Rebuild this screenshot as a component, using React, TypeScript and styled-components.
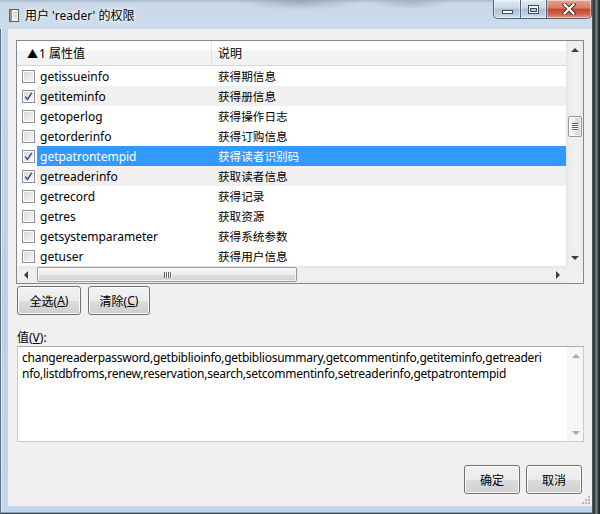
import React from "react";
import styled, { createGlobalStyle } from "styled-components";

const GlobalStyle = createGlobalStyle`
  html, body { margin: 0; padding: 0; background: #2a2f33; }
  body { font-family: "Noto Sans", "Noto Sans CJK SC", sans-serif; }
  #root { width: 600px; height: 514px; overflow: hidden; }
  * { box-sizing: border-box; }
`;

const UI_FONT = `"Noto Sans", "Noto Sans CJK SC", sans-serif`;

const Screen = styled.div`
  display: flex;
  width: 600px;
  height: 514px;
  overflow: hidden;
`;

const Desktop = styled.div`
  width: 8px;
  background: linear-gradient(90deg, #5d6266 0px, #2a2d2f 2px, #3c4447 3px, #7d969e 4px, #3b4245 6px, #1e2022 8px);
`;

const Window = styled.div`
  width: 592px;
  display: flex;
  flex-direction: column;
  padding: 0 0 8px 8px;
  background: linear-gradient(180deg, #cbdaea 0px, #c4d6ea 60px, #bcd1e8 300px, #c3d6eb 514px);
  box-shadow: inset 1px 0 0 #5f6f80, inset 0 -1px 0 #3c4652, inset 0 -2px 0 #8aa3bd, inset 2px 0 0 #e4eef8;
`;

const TitleBar = styled.div`
  height: 29px;
  display: flex;
  align-items: flex-start;
  margin-left: -8px;
  padding-left: 9px;
  background:
    radial-gradient(ellipse 60px 8px at 300px 2px, rgba(120,130,145,0.45), transparent),
    radial-gradient(ellipse 40px 6px at 410px 3px, rgba(120,130,145,0.35), transparent),
    linear-gradient(180deg, #a9b8c8 0px, #c9d7e6 3px, #cddcec 28px);
`;

const AppIcon = styled.svg`
  margin-top: 9px;
  flex: none;
`;

const TitleText = styled.div`
  margin-left: 6px;
  margin-top: 7px;
  font-family: ${UI_FONT};
  font-size: 12px;
  line-height: 18px;
  color: #000;
  text-shadow: 0 0 6px #fff, 0 0 4px #fff;
  white-space: nowrap;
`;

const Caption = styled.div`
  margin-left: auto;
  display: flex;
  height: 19px;
`;

const CapButton = styled.div<{ $kind: "min" | "max" | "close" }>`
  height: 19px;
  width: ${(p) => (p.$kind === "close" ? 45 : p.$kind === "min" ? 28 : 26)}px;
  display: flex;
  align-items: center;
  justify-content: center;
  border: 1px solid #4f6276;
  border-top: none;
  border-left-width: ${(p) => (p.$kind === "min" ? 1 : 0)}px;
  border-bottom-left-radius: ${(p) => (p.$kind === "min" ? 5 : 0)}px;
  border-bottom-right-radius: ${(p) => (p.$kind === "close" ? 5 : 0)}px;
  background: ${(p) =>
    p.$kind === "close"
      ? "linear-gradient(180deg, #e6a593 0%, #d77a63 45%, #c5452c 52%, #d0674e 80%, #e09a80 100%)"
      : "linear-gradient(180deg, #e3ecf5 0%, #c7d6e6 45%, #aebfd2 52%, #bfcfe1 80%, #d4e2f0 100%)"};
  box-shadow: inset 0 0 0 1px rgba(255,255,255,0.45);
`;

const MinGlyph = styled.div`
  width: 11px;
  height: 4px;
  margin-top: 6px;
  background: #fff;
  border: 1px solid #3b4c60;
`;

const MaxGlyph = styled.div`
  width: 11px;
  height: 9px;
  border: 1px solid #3b4c60;
  background: #fff;
  box-shadow: inset 0 0 0 1px #fff;
  position: relative;
  &::after {
    content: "";
    position: absolute;
    left: 1px;
    right: 1px;
    top: 2px;
    bottom: 1px;
    border: 1px solid #3b4c60;
    background: #b8c9dc;
  }
`;

const Client = styled.div`
  flex: 1;
  display: flex;
  flex-direction: column;
  align-items: flex-start;
  padding: 11px 8px 12px 8px;
  background: #f0f0f0;
  font-family: ${UI_FONT};
  font-size: 12px;
  color: #000;
`;

/* ---------- list view ---------- */

const ListView = styled.div`
  width: 568px;
  height: 244px;
  border: 1px solid #828790;
  background: #fff;
  display: grid;
  grid-template-columns: 1fr 17px;
  grid-template-rows: 1fr 17px;
`;

const ListContent = styled.div`
  display: flex;
  flex-direction: column;
  overflow: hidden;
`;

const Header = styled.div`
  height: 25px;
  flex: none;
  display: flex;
  border-bottom: 1px solid #d5d5d5;
  background: linear-gradient(180deg, #ffffff 0px, #ffffff 9px, #f3f4f6 10px, #f1f2f4 24px);
`;

const HeaderCell = styled.div<{ $w?: number; $pad: number }>`
  ${(p) => (p.$w ? `width: ${p.$w}px;` : "flex: 1;")}
  padding-left: ${(p) => p.$pad}px;
  display: flex;
  align-items: center;
  white-space: nowrap;
  border-right: ${(p) => (p.$w ? "1px solid #e2e3e5" : "none")};
`;

const SortMark = styled.span`
  font-size: 11px;
  margin-right: 1px;
`;

const Row = styled.div`
  height: 20px;
  flex: none;
  display: flex;
  align-items: stretch;
`;

const CheckCell = styled.div`
  width: 20px;
  flex: none;
  display: flex;
  align-items: center;
  padding-left: 5px;
`;

const RowBody = styled.div<{ $state: "plain" | "checked" | "selected" }>`
  flex: 1;
  display: grid;
  grid-template-columns: 175px 1fr;
  align-items: center;
  white-space: nowrap;
  background: ${(p) =>
    p.$state === "selected" ? "#3399ff" : p.$state === "checked" ? "#f0f0f0" : "#fff"};
  color: ${(p) => (p.$state === "selected" ? "#fff" : "#000")};
`;

const NameCell = styled.div`
  padding-left: 3px;
  font-size: 12px;
`;

const DescCell = styled.div`
  padding-left: 6px;
  font-size: 11.6px;
`;

const Box = styled.div`
  width: 13px;
  height: 13px;
  border: 1px solid #8e8f8f;
  background: #fff;
  padding: 1px;
  display: flex;
`;

const BoxInner = styled.div`
  flex: 1;
  background: linear-gradient(135deg, #d8d8d8 0%, #ececec 60%, #f8f8f8 100%);
  display: flex;
  align-items: center;
  justify-content: center;
`;

const CheckBox: React.FC<{ checked: boolean }> = ({ checked }) => (
  <Box>
    <BoxInner>
      {checked && (
        <svg width="9" height="9" viewBox="0 0 9 9">
          <path d="M1.2 4.6 L3.4 7.4 L7.8 0.8" fill="none" stroke="#3a4e8c" strokeWidth="1.5" />
        </svg>
      )}
    </BoxInner>
  </Box>
);

/* ---------- scrollbars ---------- */

const VScroll = styled.div<{ $light?: boolean }>`
  display: flex;
  flex-direction: column;
  background: ${(p) =>
    p.$light
      ? "#f6f6f6"
      : "linear-gradient(90deg, #e4e4e4 0px, #eeeeee 3px, #f0f0f0 12px, #ebebeb 17px)"};
`;

const HScroll = styled.div`
  display: flex;
  align-items: center;
  background: linear-gradient(180deg, #e4e4e4 0px, #eeeeee 3px, #f0f0f0 12px, #ebebeb 17px);
`;

const Corner = styled.div`
  background: #f0f0f0;
`;

const ArrowBtn = styled.div`
  width: 17px;
  height: 17px;
  flex: none;
  display: flex;
  align-items: center;
  justify-content: center;
`;

const Arrow = styled.div<{ $dir: "up" | "down" | "left" | "right"; $color?: string }>`
  width: 0;
  height: 0;
  border-style: solid;
  border-color: transparent;
  ${(p) => {
    const c = p.$color || "#3c3c3c";
    switch (p.$dir) {
      case "up":
        return `border-width: 0 4px 4px 4px; border-bottom-color: ${c};`;
      case "down":
        return `border-width: 4px 4px 0 4px; border-top-color: ${c};`;
      case "left":
        return `border-width: 4px 4px 4px 0; border-right-color: ${c};`;
      default:
        return `border-width: 4px 0 4px 4px; border-left-color: ${c};`;
    }
  }}
`;

const Track = styled.div<{ $horizontal?: boolean }>`
  flex: 1;
  display: flex;
  flex-direction: ${(p) => (p.$horizontal ? "row" : "column")};
  align-items: center;
`;

const VThumb = styled.div`
  margin-top: 58px;
  width: 14px;
  height: 21px;
  border: 1px solid #979797;
  border-radius: 2px;
  background: linear-gradient(90deg, #f5f5f5 0%, #ececec 50%, #dcdcdc 51%, #d4d4d4 100%);
  box-shadow: inset 0 0 0 1px rgba(255,255,255,0.7);
  display: flex;
  flex-direction: column;
  align-items: center;
  justify-content: center;
  gap: 1px;
`;

const HThumb = styled.div`
  margin-left: 3px;
  width: 260px;
  height: 15px;
  border: 1px solid #979797;
  border-radius: 2px;
  background: linear-gradient(180deg, #f5f5f5 0%, #ececec 50%, #dcdcdc 51%, #d4d4d4 100%);
  box-shadow: inset 0 0 0 1px rgba(255,255,255,0.7);
  display: flex;
  align-items: center;
  justify-content: center;
  gap: 1px;
`;

const GripH = styled.div`
  width: 6px;
  height: 1px;
  background: #5b5b5b;
  box-shadow: 0 1px 0 #fff;
`;

const GripV = styled.div`
  width: 1px;
  height: 6px;
  background: #5b5b5b;
  box-shadow: 1px 0 0 #fff;
`;

/* ---------- buttons ---------- */

const ButtonRow = styled.div`
  display: flex;
  gap: 7px;
  margin-top: 2px;
  margin-left: 1px;
`;

const Button = styled.div<{ $w: number }>`
  width: ${(p) => p.$w}px;
  height: 29px;
  border: 1px solid #707070;
  border-radius: 3px;
  background: linear-gradient(180deg, #f2f2f2 0%, #ebebeb 50%, #dddddd 51%, #cfcfcf 100%);
  box-shadow: inset 0 0 0 1px #fbfbfb;
  display: flex;
  align-items: center;
  justify-content: center;
  font-size: 12px;
  white-space: nowrap;
  color: #000;
`;

const Key = styled.span`
  text-decoration: underline;
`;

const FieldLabel = styled.div`
  margin-top: 15px;
  margin-left: 1px;
  height: 16px;
  line-height: 16px;
  font-size: 12px;
`;

const TextBox = styled.div`
  margin-left: 1px;
  width: 567px;
  height: 96px;
  border: 1px solid #c8cacf;
  border-top-color: #abadb3;
  background: #fff;
  display: flex;
`;

const TextBody = styled.div`
  flex: 1;
  padding: 3px 0 0 4px;
  font-size: 12px;
  line-height: 16px;
  letter-spacing: -0.26px;
  white-space: nowrap;
  overflow: hidden;
`;

const TextLine = styled.div``;

const TextScroll = styled(VScroll)`
  width: 16px;
`;

const Footer = styled.div`
  margin-top: 23px;
  align-self: flex-end;
  margin-right: 2px;
  display: flex;
  gap: 6px;
`;

const ResizeGrip = styled.svg`
  position: absolute;
  right: 2px;
  bottom: 2px;
`;

const ClientWrap = styled.div`
  flex: 1;
  display: flex;
  position: relative;
`;

const rows = [
  { name: "getissueinfo", desc: "获得期信息", checked: false },
  { name: "getiteminfo", desc: "获得册信息", checked: true },
  { name: "getoperlog", desc: "获得操作日志", checked: false },
  { name: "getorderinfo", desc: "获得订购信息", checked: false },
  { name: "getpatrontempid", desc: "获得读者识别码", checked: true, selected: true },
  { name: "getreaderinfo", desc: "获取读者信息", checked: true },
  { name: "getrecord", desc: "获得记录", checked: false },
  { name: "getres", desc: "获取资源", checked: false },
  { name: "getsystemparameter", desc: "获得系统参数", checked: false },
  { name: "getuser", desc: "获得用户信息", checked: false },
];

export default function App() {
  return (
    <>
      <GlobalStyle />
      <Screen>
        <Window>
          <TitleBar>
            <AppIcon width="10" height="13" viewBox="0 0 10 13">
              <rect x="0.5" y="0.5" width="9" height="12" fill="#f4efdc" stroke="#5a6470" />
              <rect x="1" y="1" width="2" height="11" fill="#8c96a3" />
              <line x1="4.5" y1="4" x2="8" y2="4" stroke="#c8bf9e" />
              <line x1="4.5" y1="7" x2="8" y2="7" stroke="#c8bf9e" />
            </AppIcon>
            <TitleText>用户 'reader' 的权限</TitleText>
            <Caption>
              <CapButton $kind="min">
                <MinGlyph />
              </CapButton>
              <CapButton $kind="max">
                <MaxGlyph />
              </CapButton>
              <CapButton $kind="close">
                <svg width="14" height="12" viewBox="0 0 14 12">
                  <path d="M2.5 1.5 L11.5 10.5 M11.5 1.5 L2.5 10.5" stroke="#3d2b2b" strokeWidth="4" strokeLinecap="square" />
                  <path d="M2.5 1.5 L11.5 10.5 M11.5 1.5 L2.5 10.5" stroke="#ffffff" strokeWidth="2.2" strokeLinecap="square" />
                </svg>
              </CapButton>
            </Caption>
          </TitleBar>
          <ClientWrap>
            <Client>
              <ListView>
                <ListContent>
                  <Header>
                    <HeaderCell $w={195} $pad={10}>
                      <SortMark>▲</SortMark>1 属性值
                    </HeaderCell>
                    <HeaderCell $pad={6}>说明</HeaderCell>
                  </Header>
                  {rows.map((r) => (
                    <Row key={r.name}>
                      <CheckCell>
                        <CheckBox checked={r.checked} />
                      </CheckCell>
                      <RowBody $state={r.selected ? "selected" : r.checked ? "checked" : "plain"}>
                        <NameCell>{r.name}</NameCell>
                        <DescCell>{r.desc}</DescCell>
                      </RowBody>
                    </Row>
                  ))}
                </ListContent>
                <VScroll>
                  <ArrowBtn>
                    <Arrow $dir="up" />
                  </ArrowBtn>
                  <Track>
                    <VThumb>
                      <GripH />
                      <GripH />
                      <GripH />
                      <GripH />
                    </VThumb>
                  </Track>
                  <ArrowBtn>
                    <Arrow $dir="down" />
                  </ArrowBtn>
                </VScroll>
                <HScroll>
                  <ArrowBtn>
                    <Arrow $dir="left" />
                  </ArrowBtn>
                  <Track $horizontal>
                    <HThumb>
                      <GripV />
                      <GripV />
                      <GripV />
                      <GripV />
                    </HThumb>
                  </Track>
                  <ArrowBtn>
                    <Arrow $dir="right" />
                  </ArrowBtn>
                </HScroll>
                <Corner />
              </ListView>

              <ButtonRow>
                <Button $w={64}>
                  全选(<Key>A</Key>)
                </Button>
                <Button $w={62}>
                  清除(<Key>C</Key>)
                </Button>
              </ButtonRow>

              <FieldLabel>
                值(<Key>V</Key>):
              </FieldLabel>
              <TextBox>
                <TextBody>
                  <TextLine>changereaderpassword,getbiblioinfo,getbibliosummary,getcommentinfo,getiteminfo,getreaderi</TextLine>
                  <TextLine>nfo,listdbfroms,renew,reservation,search,setcommentinfo,setreaderinfo,getpatrontempid</TextLine>
                </TextBody>
                <TextScroll $light>
                  <ArrowBtn>
                    <Arrow $dir="up" $color="#a8a8a8" />
                  </ArrowBtn>
                  <Track />
                  <ArrowBtn>
                    <Arrow $dir="down" $color="#a8a8a8" />
                  </ArrowBtn>
                </TextScroll>
              </TextBox>

              <Footer>
                <Button $w={56}>确定</Button>
                <Button $w={56}>取消</Button>
              </Footer>
            </Client>
            <ResizeGrip width="8" height="8" viewBox="0 0 8 8">
              <rect x="6" y="0" width="2" height="2" fill="#b5b5b5" />
              <rect x="3" y="3" width="2" height="2" fill="#b5b5b5" />
              <rect x="6" y="3" width="2" height="2" fill="#b5b5b5" />
              <rect x="0" y="6" width="2" height="2" fill="#b5b5b5" />
              <rect x="3" y="6" width="2" height="2" fill="#b5b5b5" />
              <rect x="6" y="6" width="2" height="2" fill="#b5b5b5" />
            </ResizeGrip>
          </ClientWrap>
        </Window>
        <Desktop />
      </Screen>
    </>
  );
}
